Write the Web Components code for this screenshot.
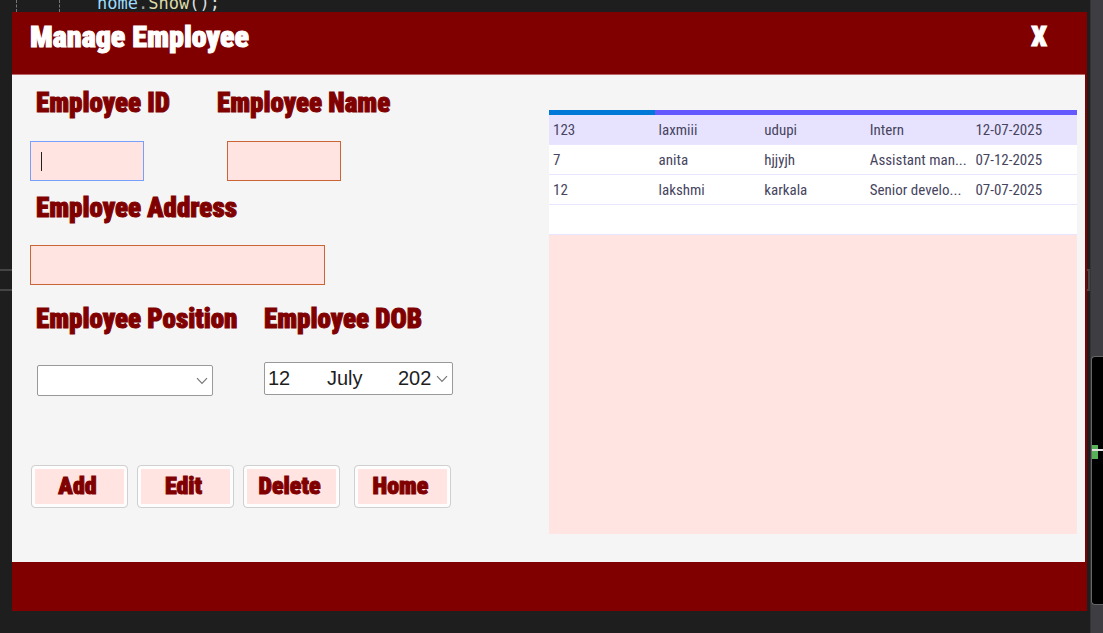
<!DOCTYPE html>
<html lang="en">
<head>
<meta charset="utf-8">
<title>Manage Employee</title>
<style>
html, body { margin: 0; background: #1e1e1e; }
body { font-family: "Open Sans", "Liberation Sans", sans-serif; }
</style>
</head>
<body>
<editor-backdrop>
  <code-line slot="code"></code-line>
  <employee-window heading="Manage Employee">
    <employee-form slot="form"></employee-form>
    <employee-grid slot="grid"></employee-grid>
  </employee-window>
</editor-backdrop>
<script>
const define = (name, html, setup) => customElements.define(name, class extends HTMLElement {
  constructor() {
    super();
    this.attachShadow({ mode: "open" }).innerHTML = html;
  }
  connectedCallback() { if (setup) setup(this, this.shadowRoot); }
});
const DISPLAY = 'font-family: Impact, "Roboto Condensed", "Liberation Sans", sans-serif; font-weight: 900; -webkit-text-stroke: 1px currentColor;';
const CHEVRON = '<svg width="12" height="8" viewBox="0 0 12 8" fill="none" stroke="#777" stroke-width="1.2" aria-hidden="true"><path d="M1 1.2 6 6.3 11 1.2"/></svg>';

/* The line of source code that shows above the window */
define("code-line", `<style>
:host { display: flex; align-items: flex-end; height: 12px; overflow: hidden; font: 500 17px/22px "DejaVu Sans Mono", monospace; color: #dcdcdc; }
.guide { flex: none; width: 0; height: 12px; margin-left: 16px; border-left: 1px dashed #777; }
.guide + .guide { margin-left: 42px; }
code { font: inherit; white-space: pre; margin: 0 0 -2px 37px; }
.v { color: #9cdcfe; } .m { color: #dcdcaa; } .d { color: #a0a0a0; }
</style><i class="guide"></i><i class="guide"></i><code><span class="v">home</span><span class="d">.</span><span class="m">Show</span>();</code>`);

/* Dark editor area with its scroll map on the right */
define("editor-backdrop", `<style>
:host { display: grid; grid-template-columns: minmax(0, 1fr) 13px; min-height: 100vh; background: #1e1e1e; }
main { display: flex; flex-direction: column; padding-bottom: 22px; }
.stage { flex: 1; display: grid; grid-template-columns: 12px minmax(0, 1fr) 3px; }
.edge { display: flex; flex-direction: column; }
.edge i { margin-top: 257px; height: 18px; border: 2px solid #454545; border-width: 2px 0; }
.edge.r i { border-right-width: 2px; }
aside { display: flex; flex-direction: column; background: #3e3e42; border-left: 1px solid #333337; }
.map { margin-top: 356px; height: 247px; background: #000; border: 1px solid #666; border-right: 0; border-radius: 4px 0 0 4px; }
.mark { width: 6px; height: 14px; margin-top: 88px; background: #57b257; }
.caret { height: 2px; margin-top: -10px; background: #e0e0e0; }
</style><main><slot name="code"></slot><div class="stage"><div class="edge"><i></i></div><slot></slot><div class="edge r"><i></i></div></div></main>
<aside><div class="map"><div class="mark"></div><div class="caret"></div></div></aside>`);

define("employee-window", `<style>
:host { display: flex; flex-direction: column; background: #800000; }
header { display: flex; justify-content: space-between; height: 62px; box-sizing: border-box; padding: 8px 40px 0 18px; color: #fff; }
h1, button { ${DISPLAY} font-size: 30px; line-height: 34px; margin: 0; }
button { border: 0; background: none; color: #fff; padding: 0; height: 34px; font-size: 28px; }
.panel { flex: 1; display: grid; grid-template-columns: minmax(0, 1fr) minmax(0, 528px); column-gap: 16px; margin-right: 2px; padding: 0 8px 28px 18px; background: #f5f5f5; border-top: 1px solid #b66; }
footer { height: 49px; }
</style><header><h1></h1><button type="button" aria-label="X">X</button></header>
<div class="panel"><slot name="form"></slot><slot name="grid"></slot></div><footer></footer>`,
(el, root) => { root.querySelector("h1").textContent = el.getAttribute("heading"); });

define("employee-form", `<style>
:host { display: block; padding-top: 12px; color: #800000; }
form { margin: 0; }
.row { display: flex; }
label { display: block; ${DISPLAY} font-size: 27px; line-height: 32px; white-space: nowrap; }
.narrow { width: 187px; } .wide { width: 234px; }
.inset { padding-left: 6px; }
input, select { box-sizing: border-box; font: 20px/24px "Liberation Sans", sans-serif; color: #1e1e1e; border-radius: 0; outline: 0; margin: 0; }
.box { display: block; width: 114px; height: 40px; margin-top: 22px; padding: 0 8px; background: #ffe4e1; border: 1px solid #cb6535; }
.box.focus { border-color: #76a0fb; width: 100%; margin: 0; }
.entry { display: grid; width: 114px; margin-top: 22px; }
.entry > * { grid-area: 1 / 1; }
.entry i { width: 1px; height: 19px; margin-left: 11px; align-self: center; background: #222; z-index: 1; }
.name { margin-left: 10px; }
.long { width: 295px; margin-top: 21px; }
.address { margin-top: 11px; }
.picks { margin-top: 18px; }
.combo { display: grid; width: 176px; margin: 30px 0 0 7px; align-items: center; }
.combo > * { grid-area: 1 / 1; }
.combo svg { justify-self: end; margin-right: 5px; }
select { appearance: none; width: 100%; height: 31px; background: #fff; border: 1px solid #999; border-radius: 2px; }
.date { display: flex; align-items: center; box-sizing: border-box; width: 189px; height: 33px; margin-top: 27px; background: #fff; border: 1px solid #999; border-radius: 2px; }
.date input { border: 0; background: none; padding: 0; height: 28px; }
.date .day { width: 62px; padding-left: 3px; } .month { width: 71px; } .year { width: 38px; }
.date button { display: flex; border: 0; background: none; padding: 0; }
.actions { display: flex; gap: 9px; margin: 69px 0 0 1px; }
.actions > :last-child { margin-left: 5px; }
</style><form>
<div class="row"><div class="narrow"><label class="inset" for="id">Employee ID</label><div class="entry"><input class="box focus" id="id"><i></i></div></div>
<div><label for="name">Employee Name</label><input class="box name" id="name"></div></div>
<div class="address"><label class="inset" for="address">Employee Address</label><input class="box long" id="address"></div>
<div class="row picks"><div class="wide"><label class="inset" for="position">Employee Position</label><div class="combo"><select id="position"><option></option></select>${CHEVRON}</div></div>
<div><label for="day">Employee DOB</label><div class="date"><input class="day" id="day" value="12"><input class="month" aria-label="Month" value="July"><input class="year" aria-label="Year" value="202"><button type="button" aria-label="Open calendar">${CHEVRON}</button></div></div></div>
<div class="actions"><form-button>Add</form-button><form-button>Edit</form-button><form-button>Delete</form-button><form-button>Home</form-button></div>
</form>`);

define("form-button", `<style>
:host { display: block; }
button { display: block; box-sizing: border-box; width: 97px; height: 43px; padding: 0 4px 2px 0; border: 1px solid #d0d0d0; border-radius: 4px; background: #ffe4e1; box-shadow: inset 0 0 0 3px #fdfdfd; color: #800000; ${DISPLAY} font-size: 24px; line-height: 38px; }
</style><button type="button"><slot></slot></button>`);

define("employee-grid", `<style>
:host { display: block; margin-top: 35px; background: #ffe4e1; }
table { width: 100%; border-collapse: collapse; table-layout: fixed; background: #fff; color: #47455e; font: 15px/20px "Roboto Condensed", "Liberation Sans", sans-serif; }
th { height: 5px; padding: 0; background: #6458ff; }
th:first-child { background: #0078d7; }
td { height: 29px; padding: 0 0 0 4px; border-bottom: 1px solid #e7e5ff; white-space: nowrap; overflow: hidden; }
tbody tr:first-child { background: #e7e3ff; }
</style><table><thead><tr><th></th><th></th><th></th><th></th><th></th></tr></thead><tbody></tbody></table>`,
(el, root) => {
  const rows = [
    ["123", "laxmiii", "udupi", "Intern", "12-07-2025"],
    ["7", "anita", "hjjyjh", "Assistant man...", "07-12-2025"],
    ["12", "lakshmi", "karkala", "Senior develo...", "07-07-2025"],
    ["", "", "", "", ""]
  ];
  root.querySelector("tbody").innerHTML = rows.map(r => "<tr>" + r.map(c => `<td>${c}</td>`).join("") + "</tr>").join("");
});
</script>
</body>
</html>
